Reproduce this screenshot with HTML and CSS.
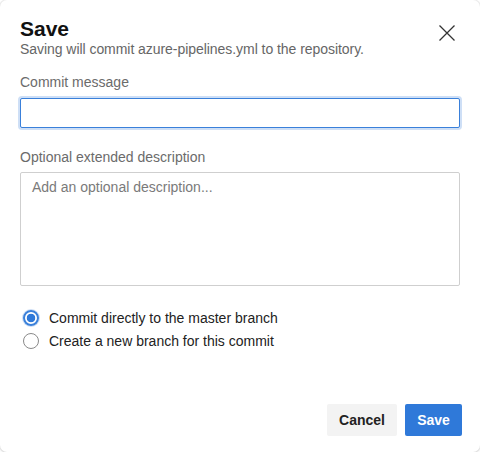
FILE: index.html
```html
<!DOCTYPE html>
<html lang="en">
<head>
<meta charset="utf-8">
<title>Save</title>
<link rel="stylesheet" href="styles.css">
</head>
<body>
<div class="dialog">
  <div class="header">
    <div class="heading">
      <h1 class="title">Save</h1>
      <p class="subtitle">Saving will commit azure-pipelines.yml to the repository.</p>
    </div>
    <button class="close" aria-label="Close">
      <svg width="16" height="16" viewBox="0 0 16 16"><path d="M0.5 0.5 L15.5 15.5 M15.5 0.5 L0.5 15.5" stroke="#333" stroke-width="1.3" fill="none"/></svg>
    </button>
  </div>
  <label class="label first">Commit message</label>
  <input class="input" type="text">
  <label class="label second">Optional extended description</label>
  <textarea class="textarea" placeholder="Add an optional description..."></textarea>
  <div class="radios">
    <label class="radio-row"><span class="radio checked"></span>Commit directly to the master branch</label>
    <label class="radio-row"><span class="radio"></span>Create a new branch for this commit</label>
  </div>
  <div class="footer">
    <button class="btn cancel">Cancel</button>
    <button class="btn primary">Save</button>
  </div>
</div>
</body>
</html>
```

FILE: styles.css
```css
* { box-sizing: border-box; }
html, body { margin: 0; padding: 0; background: #ffffff; }
body { font-family: "Liberation Sans", Arial, sans-serif; color: #222; }
.dialog {
  width: 480px;
  height: 452px;
  background: #fff;
  border-radius: 7px;
  box-shadow: 0 0 0 1px rgba(0,0,0,0.06), 0 1px 3px rgba(0,0,0,0.12);
  padding: 17px 18px 0 20px;
  display: flex;
  flex-direction: column;
}
.header { display: flex; justify-content: space-between; align-items: flex-start; }
.title { margin: 0; font-size: 21px; line-height: 24px; font-weight: 700; color: #111; }
.subtitle { margin: 0; font-size: 14px; line-height: 16px; color: #666; letter-spacing: -0.05px; }
.close {
  border: 0; background: none; padding: 0; margin: 8px 7px 0 0;
  width: 16px; height: 16px; display: block;
}
.close svg { display: block; }
.label { display: block; font-size: 14px; line-height: 18px; color: #6b6b6b; }
.label.first { margin-top: 16px; }
.label.second { margin-top: 20px; }
.input {
  margin-top: 7px;
  width: 440px;
  height: 30px;
  border: 1px solid #3a80da;
  border-radius: 2px;
  box-shadow: 0 0 0 2px rgba(58,128,218,0.25);
  outline: none;
  font: inherit;
}
.textarea {
  margin-top: 6px;
  width: 440px;
  height: 114px;
  border: 1px solid #cfcfcf;
  border-radius: 2px;
  padding: 5px 11px;
  font-family: "Liberation Sans", Arial, sans-serif;
  font-size: 14px;
  line-height: 18px;
  resize: none;
  outline: none;
}
.textarea::placeholder { color: #7a7a7a; }
.radios { margin-top: 20px; display: flex; flex-direction: column; }
.radio-row {
  display: flex; align-items: center; height: 23px;
  font-size: 14px; color: #222; padding-left: 3px;
}
.radio {
  width: 16px; height: 16px; border-radius: 50%;
  border: 1px solid #8a8a8a; margin-right: 10px; flex: none;
  background: #fff;
}
.radio.checked {
  border: 2px solid #3a80da;
  background: radial-gradient(circle, #2f79d9 0 4px, #fff 4.6px);
  box-shadow: 0 0 0 1px rgba(58,128,218,0.25);
}
.footer {
  margin-top: auto;
  margin-bottom: 16px;
  display: flex; justify-content: flex-end; gap: 8px;
}
.btn {
  height: 32px; border: 0; border-radius: 2px;
  font-family: "Liberation Sans", Arial, sans-serif;
  font-size: 14px; font-weight: 700; padding: 0 12px;
}
.cancel { background: #f3f3f3; color: #222; width: 70px; }
.primary { background: #2f79d9; color: #fff; width: 57px; }
```
